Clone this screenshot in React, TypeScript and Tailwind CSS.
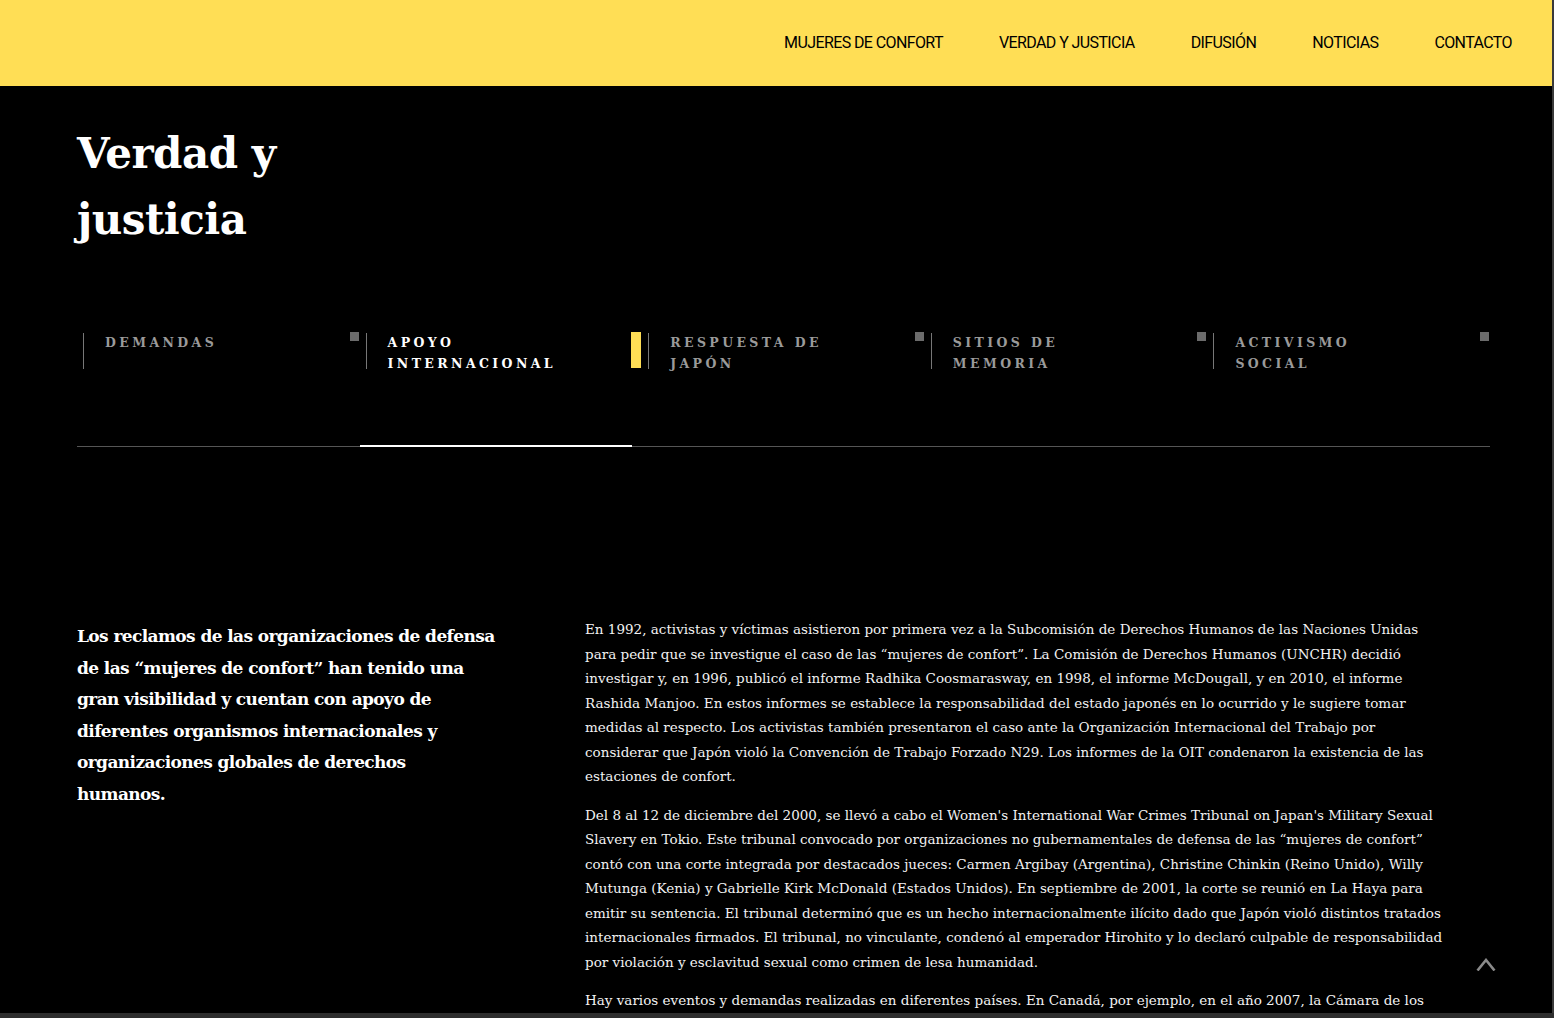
const navItems = ["MUJERES DE CONFORT", "VERDAD Y JUSTICIA", "DIFUSIÓN", "NOTICIAS", "CONTACTO"];

const tabs = [
  { label: "DEMANDAS", active: false },
  { label: "APOYO INTERNACIONAL", active: true },
  { label: "RESPUESTA DE JAPÓN", active: false },
  { label: "SITIOS DE MEMORIA", active: false },
  { label: "ACTIVISMO SOCIAL", active: false },
];

const serif = { fontFamily: '"DejaVu Serif", "Liberation Serif", serif' };

export default function App() {
  return (
    <div className="min-h-screen bg-black text-white border-r-2 border-[#3a3a3a]" style={serif}>
      <header className="h-[86px] bg-[#ffde55] flex items-center justify-end pr-[40px]">
        <nav
          className="flex items-center gap-[56px] text-[16px] text-black tracking-[-0.6px]"
          style={{ fontFamily: 'Roboto, "Liberation Sans", sans-serif' }}
        >
          {navItems.map((item) => (
            <a key={item} href="#" className="leading-none">
              {item}
            </a>
          ))}
        </nav>
      </header>

      <main className="px-[77px] pr-[62px]">
        <h1 className="pt-[35px] text-[42px] font-bold leading-[66px] tracking-[-0.5px]">
          Verdad y<br />
          justicia
        </h1>

        <div className="mt-[79px] grid grid-cols-5 border-b border-[#555]">
          {tabs.map((tab) => (
            <div key={tab.label} className="relative h-[114px]">
              <div className="flex">
                <span className="ml-[6px] mt-[1px] h-[36px] w-px shrink-0 bg-[#777]" />
                <span
                  className={`ml-[21px] w-[180px] text-[12.5px] font-bold tracking-[3.4px] leading-[21px] ${
                    tab.active ? "text-white" : "text-[#9a9a9a]"
                  }`}
                >
                  {tab.label}
                </span>
              </div>
              {tab.active ? (
                <>
                  <span className="absolute right-[1px] top-0 h-[36px] w-[10px] bg-[#ffde55]" />
                  <span className="absolute left-0 right-[10px] -bottom-px h-[2px] bg-white" />
                </>
              ) : (
                <span className="absolute right-[1px] top-0 h-[9px] w-[9px] bg-[#6b6b6b]" />
              )}
            </div>
          ))}
        </div>

        <section className="mt-[178px] flex gap-[88px] pb-[60px]">
          <p className="-mt-[4px] w-[420px] shrink-0 text-[17px] font-bold leading-[31.5px] tracking-[-0.6px]">
            Los reclamos de las organizaciones de defensa de las “mujeres de confort” han tenido una gran
            visibilidad y cuentan con apoyo de diferentes organismos internacionales y organizaciones
            globales de derechos humanos.
          </p>
          <div className="-mt-[8px] w-[862px] text-[13.5px] leading-[24.5px] text-[#f2f2f2] space-y-[14px]">
            <p>
              En 1992, activistas y víctimas asistieron por primera vez a la Subcomisión de Derechos Humanos
              de las Naciones Unidas para pedir que se investigue el caso de las “mujeres de confort”. La
              Comisión de Derechos Humanos (UNCHR) decidió investigar y, en 1996, publicó el informe Radhika
              Coosmarasway, en 1998, el informe McDougall, y en 2010, el informe Rashida Manjoo. En estos
              informes se establece la responsabilidad del estado japonés en lo ocurrido y le sugiere tomar
              medidas al respecto. Los activistas también presentaron el caso ante la Organización
              Internacional del Trabajo por considerar que Japón violó la Convención de Trabajo Forzado N29.
              Los informes de la OIT condenaron la existencia de las estaciones de confort.
            </p>
            <p>
              Del 8 al 12 de diciembre del 2000, se llevó a cabo el Women's International War Crimes Tribunal
              on Japan's Military Sexual Slavery en Tokio. Este tribunal convocado por organizaciones no
              gubernamentales de defensa de las “mujeres de confort” contó con una corte integrada por
              destacados jueces: Carmen Argibay (Argentina), Christine Chinkin (Reino Unido), Willy Mutunga
              (Kenia) y Gabrielle Kirk McDonald (Estados Unidos). En septiembre de 2001, la corte se reunió en
              La Haya para emitir su sentencia. El tribunal determinó que es un hecho internacionalmente
              ilícito dado que Japón violó distintos tratados internacionales firmados. El tribunal, no
              vinculante, condenó al emperador Hirohito y lo declaró culpable de responsabilidad por violación
              y esclavitud sexual como crimen de lesa humanidad.
            </p>
            <p>
              Hay varios eventos y demandas realizadas en diferentes países. En Canadá, por ejemplo, en el año
              2007, la Cámara de los Comunes aprobó una moción que insta al gobierno de Japón a reconocer su
              responsabilidad y a ofrecer una disculpa formal a las sobrevivientes.
            </p>
          </div>
        </section>
      </main>

      <a href="#" className="fixed right-[58px] bottom-[47px] text-[#8a8a8a]" aria-label="Volver arriba">
        <svg width="20" height="13" viewBox="0 0 20 13" fill="none" stroke="currentColor" strokeWidth="2.6">
          <polyline points="1.5,12.5 10,2 18.5,12.5" />
        </svg>
      </a>
      <div className="fixed inset-x-0 bottom-0 h-[5px] bg-[#2e2e2e]" />
    </div>
  );
}
